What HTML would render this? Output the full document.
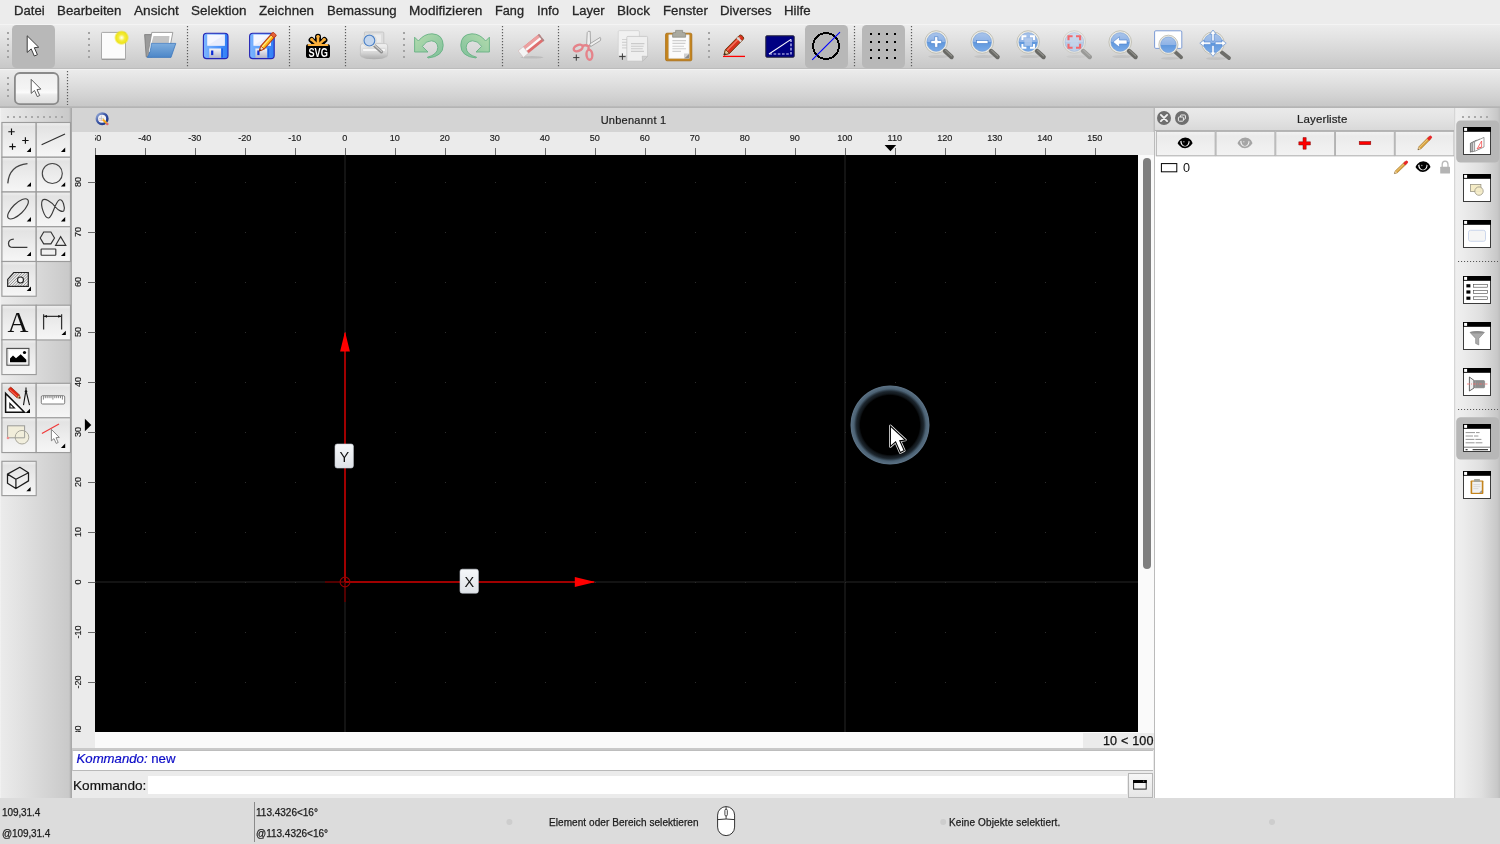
<!DOCTYPE html>
<html><head><meta charset="utf-8"><title>QCAD</title>
<style>
*{box-sizing:border-box;margin:0;padding:0}
body{will-change:transform}
html,body{width:1500px;height:844px;overflow:hidden;background:#ececec;font-family:"Liberation Sans",sans-serif;color:#262626}
.a{position:absolute}
svg{position:absolute;overflow:visible}
#menubar{left:0;top:0;width:1500px;height:24px;background:#ececec}
#menubar span{position:absolute;top:1.7px;font-size:13.6px;line-height:18px;color:#262626;-webkit-text-stroke:.3px #262626;white-space:nowrap;transform-origin:0 50%}
#tb1{left:0;top:24px;width:1500px;height:44px;background:linear-gradient(#f4f4f4 0,#f4f4f4 1px,#ececec 1.5px,#e3e3e3 30%,#d3d3d3 72%,#c8c8c8 100%)}
#tb2{left:0;top:69px;width:1500px;height:38px;background:linear-gradient(#f3f3f3 0,#f3f3f3 1px,#ebebeb 1.5px,#e2e2e2 30%,#d2d2d2 72%,#c6c6c6 100%)}
#left{left:0;top:108px;width:72px;height:690px;background:linear-gradient(90deg,#f4f4f4 0,#ebebeb 2%,#e3e3e3 25%,#d6d6d6 60%,#c9c9c9 96%,#adadad 98.5%,#a6a6a6 100%)}
#tabbar{left:72px;top:108px;width:1082px;height:24px;background:#d4d4d4}
#hruler{left:72px;top:132px;width:1082px;height:23px;background:#ebebeb}
#vruler{left:72px;top:155px;width:23px;height:593px;background:#ebebeb}
#canvas{left:95px;top:155px;width:1043px;height:577px;background:#000;overflow:hidden}
#vscroll{left:1138px;top:155px;width:16px;height:577px;background:#fafafa}
#hscroll{left:95px;top:732px;width:1059px;height:16px;background:#fafafa}
#status{left:0;top:798px;width:1500px;height:46px;background:#dcdcdc}
#dock{left:1155px;top:108px;width:299px;height:690px;background:#fff}
#rtb{left:1454px;top:108px;width:46px;height:690px;background:linear-gradient(90deg,#cdcdcd 0,#efefef 4%,#ececec 20%,#dfdfdf 60%,#c8c8c8 94%,#bdbdbd 100%)}
</style></head><body>
<div id="menubar" class="a"><span style="left:13.6px;transform:scaleX(0.9643)">Datei</span><span style="left:56.8px;transform:scaleX(0.9792)">Bearbeiten</span><span style="left:133.6px;transform:scaleX(1.0050)">Ansicht</span><span style="left:190.8px;transform:scaleX(0.9907)">Selektion</span><span style="left:258.8px;transform:scaleX(0.9835)">Zeichnen</span><span style="left:326.6px;transform:scaleX(0.9694)">Bemassung</span><span style="left:408.8px;transform:scaleX(1.0014)">Modifizieren</span><span style="left:494.8px;transform:scaleX(0.9360)">Fang</span><span style="left:536.8px;transform:scaleX(0.9697)">Info</span><span style="left:571.6px;transform:scaleX(0.9584)">Layer</span><span style="left:616.8px;transform:scaleX(0.9925)">Block</span><span style="left:662.6px;transform:scaleX(0.9719)">Fenster</span><span style="left:719.6px;transform:scaleX(0.9759)">Diverses</span><span style="left:783.6px;transform:scaleX(0.9778)">Hilfe</span></div>
<div id="tb1" class="a"></div>
<div class="a" style="left:0;top:67.5px;width:1500px;height:1.5px;background:linear-gradient(#c2c2c2,#b6b6b6)"></div>
<div id="tb2" class="a"></div>
<div class="a" style="left:0;top:106.4px;width:1500px;height:1.6px;background:linear-gradient(#bcbcbc,#b1b1b1)"></div>
<svg class="a" style="left:0;top:0" width="1500" height="110" viewBox="0 0 1500 110">
<defs>
<linearGradient id="gBlue" x1="0" y1="0" x2="0" y2="1"><stop offset="0" stop-color="#a9c4ea"/><stop offset=".5" stop-color="#8fb3e6"/><stop offset=".5" stop-color="#5f97dc"/><stop offset="1" stop-color="#79aae8"/></linearGradient>
<linearGradient id="gFloppy" x1="0" y1="0" x2="1" y2="0"><stop offset="0" stop-color="#7db6ff"/><stop offset="1" stop-color="#2f7df6"/></linearGradient>
<linearGradient id="gShut" x1="0" y1="0" x2="0" y2="1"><stop offset="0" stop-color="#f4f4f8"/><stop offset="1" stop-color="#b4b4c6"/></linearGradient>
<linearGradient id="gFolder" x1="0" y1="0" x2="0" y2="1"><stop offset="0" stop-color="#7faede"/><stop offset="1" stop-color="#4c86c8"/></linearGradient>
<linearGradient id="gPrinter" x1="0" y1="0" x2="0" y2="1"><stop offset="0" stop-color="#f2f2f2"/><stop offset=".6" stop-color="#dcdcdc"/><stop offset="1" stop-color="#b8b8b8"/></linearGradient>
<linearGradient id="gGreen" x1="0" y1="0" x2="1" y2="1"><stop offset="0" stop-color="#b5dcae"/><stop offset="1" stop-color="#7fc09a"/></linearGradient>
<linearGradient id="gBtn" x1="0" y1="0" x2="0" y2="1"><stop offset="0" stop-color="#eeeeee"/><stop offset=".5" stop-color="#f4f4f4"/><stop offset=".62" stop-color="#fbfbfb"/><stop offset=".7" stop-color="#ececec"/><stop offset="1" stop-color="#dcdcdc"/></linearGradient>
<radialGradient id="gGlow"><stop offset="0" stop-color="#fffff6"/><stop offset=".16" stop-color="#fdfbb4"/><stop offset=".42" stop-color="#f4ec3c"/><stop offset=".74" stop-color="#eee41a"/><stop offset="1" stop-color="#eee41a" stop-opacity="0"/></radialGradient>
<g id="hdl5" fill="#a3a3a3"><rect x="-1" y="32" width="2" height="2"/><rect x="-1" y="38" width="2" height="2"/><rect x="-1" y="44" width="2" height="2"/><rect x="-1" y="50" width="2" height="2"/><rect x="-1" y="56" width="2" height="2"/></g>
<line id="sep1" x1="0" y1="26" x2="0" y2="67" stroke="#5c5c5c" stroke-width="1.2" stroke-dasharray="1.2 1.8"/>
<g id="mag"><circle cx="0" cy="0" r="11.3" fill="#ecebe4" stroke="#b9b8ac" stroke-width=".8"/><circle cx="0" cy="0" r="9.3" fill="url(#gBlue)" stroke="#6f9bd6" stroke-width=".6"/><path d="M8.8 9 L15.4 15" stroke="#6a6a66" stroke-width="4.4" stroke-linecap="round"/><path d="M9.4 8.4 L15.6 14" stroke="#8f8f8a" stroke-width="1.1" stroke-linecap="round"/></g>
<g id="floppy"><rect x="0" y="0" width="24.6" height="25.4" rx="3.2" fill="url(#gFloppy)" stroke="#2525b4" stroke-width="1.1"/><rect x="3.8" y="1.3" width="17.6" height="11.2" fill="#f4f6ff"/><path d="M3.8 12.5 L21.4 1.3 L21.4 12.5Z" fill="#e3e8fb" opacity=".7"/><rect x="5.8" y="15.3" width="11.8" height="9.4" fill="url(#gShut)"/><rect x="7.7" y="17.3" width="2.2" height="4.6" fill="#0a2ad6"/><rect x="18" y="15.3" width="1.6" height="9" fill="#1d5fe8"/></g>
</defs>
<!-- handles & separators -->
<use href="#hdl5" x="8"/><use href="#hdl5" x="89"/><use href="#hdl5" x="404"/><use href="#hdl5" x="709"/>
<use href="#sep1" x="187.5"/><use href="#sep1" x="289.5"/><use href="#sep1" x="345.5"/><use href="#sep1" x="502.5"/><use href="#sep1" x="558.5"/><use href="#sep1" x="854.5"/><use href="#sep1" x="911.5"/>
<!-- pressed buttons -->
<rect x="12" y="25" width="43" height="43" rx="4.5" fill="#b8b8b8"/>
<rect x="805" y="25" width="43" height="43" rx="4.5" fill="#b8b8b8"/>
<rect x="862" y="25" width="43" height="43" rx="4.5" fill="#b8b8b8"/>
<!-- arrow cursor -->
<path d="M27.2 35.8 L27.2 52.4 L31.2 48.9 L34.3 56 L37.4 54.7 L34.3 47.7 L38.7 47.2 Z" fill="#fff" stroke="#3c3c3c" stroke-width="1" stroke-linejoin="miter"/>
<!-- new -->
<rect x="101.5" y="32.4" width="24" height="27.6" rx="1" fill="#8c8c8c"/>
<rect x="101.5" y="32.4" width="24" height="26.6" rx="1" fill="#fbfbfb" stroke="#a9a9a9" stroke-width="1"/>
<circle cx="121.6" cy="37.7" r="7.6" fill="url(#gGlow)"/>
<!-- open -->
<path d="M144.6 34.6 L152 34.6 L152 56.8 L146.2 56.8 Z" fill="#9a9a9a" stroke="#777" stroke-width=".8"/>
<path d="M151.8 32.4 L172.8 32.4 L170.6 44 L148.2 53 Z" fill="#fff" stroke="#8a8a8a" stroke-width=".8"/>
<path d="M153.5 36 L169.5 36 L168.8 43 L151.5 43Z" fill="#c4c4c4"/>
<path d="M151.4 43.4 L175.8 43.4 L171 57.4 L147.2 57.4 Q150.6 53 151.4 43.4Z" fill="url(#gFolder)" stroke="#3f78bd" stroke-width=".8"/>
<!-- save / save as -->
<use href="#floppy" x="203.4" y="33.2"/>
<use href="#floppy" x="249.6" y="33.2"/>
<g transform="translate(259.4 51) rotate(-48.5)"><path d="M0 0 L4.6 -2.2 L22 -2.2 L22 2.2 L4.6 2.2Z" fill="#fdb813" stroke="#b83a16" stroke-width="1"/><path d="M4.6 -0.6 L22 -0.6" stroke="#ffe680" stroke-width="1.4"/><path d="M0 0 L4.6 -2.2 L4.6 2.2Z" fill="#f3e0c0" stroke="#b83a16" stroke-width=".8"/><path d="M0 0 L1.8 -.9 L1.8 .9Z" fill="#222"/><rect x="19.6" y="-2.2" width="3.6" height="4.4" fill="#e6623a" stroke="#b83a16" stroke-width=".8"/></g>
</svg>
<svg class="a" style="left:0;top:0" width="1500" height="110" viewBox="0 0 1500 110">
<!-- SVG icon -->
<g stroke="#000" stroke-width="6" stroke-linecap="round"><path d="M318 44.6 L318 36.7"/><path d="M316.4 44.8 L311.6 40"/><path d="M319.6 44.8 L324.4 40"/></g>
<rect x="306" y="44" width="24" height="14" rx="2.6" fill="#000"/>
<g stroke="#fbb03b" stroke-width="2.6" stroke-linecap="round"><path d="M318 44 L318 36.6"/><path d="M317 44.4 L311.8 39.6"/><path d="M319 44.4 L324.2 39.6"/></g>
<circle cx="318" cy="36.6" r="1.7" fill="#fbb03b"/><circle cx="311.8" cy="39.6" r="1.7" fill="#fbb03b"/><circle cx="324.2" cy="39.6" r="1.7" fill="#fbb03b"/>
<rect x="307.6" y="44" width="20.8" height="1.9" rx=".9" fill="#fbb03b"/>
<text x="318.1" y="56.8" font-family="Liberation Sans" font-weight="bold" font-size="13.1" fill="#fff" text-anchor="middle" textLength="19.4" lengthAdjust="spacingAndGlyphs">SVG</text>
<!-- print preview -->
<rect x="364.4" y="32" width="19.4" height="14" rx="1" fill="#dedede" stroke="#c2c2c2" stroke-width=".8"/>
<rect x="372" y="34.5" width="9" height="8" fill="#ececec"/>
<ellipse cx="374" cy="57.6" rx="11" ry="1.6" fill="#9a9a9a" opacity=".6"/>
<rect x="360.4" y="43.6" width="27.2" height="13.6" rx="2.4" fill="url(#gPrinter)" stroke="#bdbdbd" stroke-width=".7"/>
<rect x="362.6" y="48.4" width="22.8" height="3.2" rx="1" fill="#f6f6f6" stroke="#c9c9c9" stroke-width=".5"/>
<path d="M373.8 45 L381.4 51.8" stroke="#8f8f8f" stroke-width="3.4" stroke-linecap="round"/><path d="M374.4 45 L381.6 51.4" stroke="#cfcfcf" stroke-width="1.2" stroke-linecap="round"/>
<circle cx="369.4" cy="40.6" r="6.9" fill="#f1f1ee" stroke="#cfcfc8" stroke-width=".6"/>
<circle cx="369.4" cy="40.6" r="5.4" fill="#c3d6ee" stroke="#4f82c6" stroke-width="1.2"/>
<!-- undo / redo -->
<path id="undo" d="M414.6 37.2 L414.6 52 L428 52 L422.4 46.4 Q426 40.6 431.4 40.8 Q437.6 41.4 437.8 47.6 Q437.6 54.6 427.4 57.2 L428 58 Q443.2 56.4 443.2 45.4 Q443 34.2 432 33.8 Q424 33.8 418.4 41Z" fill="url(#gGreen)" stroke="#66b183" stroke-width=".9" stroke-linejoin="round"/>
<use href="#undo" transform="translate(904 0) scale(-1 1)"/>
<!-- eraser -->
<ellipse cx="532" cy="57.3" rx="11.5" ry="1.3" fill="#b4b4b4" opacity=".75"/>
<g transform="translate(518.4 51.2) rotate(-39)"><rect x="0" y="-0.4" width="27" height="8.4" rx="1" fill="#de6e6e"/><rect x="0" y="-0.4" width="27" height="3" fill="#eca0a0"/><rect x="6.5" y="2.6" width="20.5" height="2.5" fill="#fafafa"/><rect x="0" y="-0.4" width="6.5" height="8.4" fill="#f4f4f4" stroke="#c8c8c8" stroke-width=".5"/><rect x="25.4" y="-0.4" width="1.6" height="8.4" fill="#a88"/></g>
<!-- cut -->
<path d="M586.6 46 L587.2 32.6 Q588 30.6 590.2 31.4 L590.6 45.4Z" fill="#efefef" stroke="#8d8d8d" stroke-width=".7"/>
<path d="M589.6 44 L600.2 37.4 Q601.2 38.6 600.4 40.6 L590.6 46.6Z" fill="#efefef" stroke="#8d8d8d" stroke-width=".7"/>
<g fill="none" stroke="#e5838a" stroke-width="2.4"><ellipse cx="578.2" cy="48" rx="4.7" ry="2.9" transform="rotate(-24 578.2 48)"/><ellipse cx="589.4" cy="54.8" rx="2.9" ry="5" transform="rotate(-6 589.4 54.8)"/><path d="M582.6 45.8 Q586 44.6 588.6 46.2 Q588.4 48 588.6 50"/></g>
<path d="M573.2 57.6 H579.4 M576.3 54.5 V60.7" stroke="#3a3a3a" stroke-width="1"/>
<!-- copy -->
<rect x="618.2" y="30.6" width="21.2" height="25" rx="1.2" fill="#f1f1f1" stroke="#cfcfcf" stroke-width=".7"/>
<g stroke="#d3d3d3" stroke-width="1.2"><path d="M622 39.5 H628 M622 42.3 H628 M622 45.1 H628 M622 47.9 H628"/></g>
<path d="M626.8 37.4 Q626.8 36.4 627.8 36.4 L646.6 36.4 Q647.6 36.4 647.6 37.4 L647.6 56.4 L642.6 61.2 L627.8 61.2 Q626.8 61.2 626.8 60.2Z" fill="#efefef" stroke="#c4c4c4" stroke-width=".8"/>
<path d="M647.6 56.4 L642.6 61.2 L642.2 56.2Z" fill="#d0d0d0" stroke="#b5b5b5" stroke-width=".6"/>
<g stroke="#cbcbcb" stroke-width="1.1"><path d="M631 43.6 H644.4 M631 46.2 H643.6 M631 48.8 H642.8 M631 51.4 H644"/></g>
<path d="M619.2 56.6 H625.6 M622.4 53.4 V59.8" stroke="#3a3a3a" stroke-width="1"/>
<!-- paste -->
<rect x="665.6" y="33.2" width="26.2" height="27.6" rx="1.4" fill="#c4841d" stroke="#a86c12" stroke-width=".8"/>
<path d="M668.8 34.8 L689.2 34.8 L689.2 58.4 L668.8 58.4Z" fill="#fbfbfb" stroke="#d9d9d9" stroke-width=".6"/>
<path d="M689.2 53.4 L684 58.4 L689.2 58.4Z" fill="#8b8b8b"/><path d="M684 53.6 L689.2 53.4 L684 58.4Z" fill="#cfcfcf"/>
<g stroke="#cfcfcf" stroke-width="1.1"><path d="M672.4 40.6 H686 M672.4 43.4 H685.4 M672.4 46.2 H684 M672.4 48.8 H686 M672.4 51.4 H681"/></g>
<path d="M672.6 37.2 L672.6 34 Q672.6 32.6 674.6 32.6 L675.6 32.6 L675.6 30.4 L682.6 30.4 L682.6 32.6 L683.6 32.6 Q685.6 32.6 685.6 34 L685.6 37.2Z" fill="#aaaaa0" stroke="#85857c" stroke-width=".7"/>
<!-- red pencil -->
<path d="M723 56.4 H745" stroke="#ff0000" stroke-width="1.3"/>
<g transform="translate(724 55) rotate(-45.5)"><path d="M0 0 L5 -2.8 L24.4 -2.8 Q26.4 -2.8 26.4 -0.8 L26.4 0.8 Q26.4 2.8 24.4 2.8 L5 2.8Z" fill="#d8301c" stroke="#6a3a10" stroke-width=".9"/><path d="M5 -1 L24 -1" stroke="#f07860" stroke-width="1.3"/><path d="M0 0 L5 -2.8 L5 2.8Z" fill="#e9c79a" stroke="#6a3a10" stroke-width=".8"/><path d="M0 0 L2 -1.1 L2 1.1Z" fill="#222"/><rect x="20.6" y="-2.8" width="2.2" height="5.6" fill="#d9d9d9"/></g>
<!-- blue dim icon -->
<rect x="765.8" y="35.8" width="28.4" height="21.4" rx="1" fill="#000082" stroke="#26263a" stroke-width="1"/>
<path d="M769 54 L791 39.4" stroke="#fff" stroke-width="1.1"/><path d="M791 39.4 L791 54 L769 54" stroke="#d8d8ff" stroke-width="1.2" stroke-dasharray="2.6 1.6" fill="none"/>
<!-- circle icon -->
<circle cx="826" cy="46" r="12.9" fill="none" stroke="#000" stroke-width="1.9" shape-rendering="crispEdges"/>
<path d="M812.2 59.8 L840 32.2" stroke="#0000ff" stroke-width="1.1"/>
<!-- grid dots -->
<g fill="#000"><rect x="870" y="33" width="2" height="2"/><rect x="878" y="33" width="2" height="2"/><rect x="886" y="33" width="2" height="2"/><rect x="894" y="33" width="2" height="2"/><rect x="870" y="41" width="2" height="2"/><rect x="878" y="41" width="2" height="2"/><rect x="886" y="41" width="2" height="2"/><rect x="894" y="41" width="2" height="2"/><rect x="870" y="49" width="2" height="2"/><rect x="878" y="49" width="2" height="2"/><rect x="886" y="49" width="2" height="2"/><rect x="894" y="49" width="2" height="2"/><rect x="870" y="57" width="2" height="2"/><rect x="878" y="57" width="2" height="2"/><rect x="886" y="57" width="2" height="2"/><rect x="894" y="57" width="2" height="2"/></g>
</svg>
<svg class="a" style="left:0;top:0" width="1500" height="110" viewBox="0 0 1500 110">
<defs>
<g id="magshadow"><ellipse cx="2" cy="14.6" rx="10" ry="1.5" fill="#8e8e8e" opacity=".2"/></g>
</defs>
<!-- zoom in -->
<use href="#magshadow" x="936.2" y="42"/><use href="#mag" x="936.2" y="42"/>
<path d="M934.6 36.6 H937.8 V40.4 H941.6 V43.6 H937.8 V47.4 H934.6 V43.6 H930.8 V40.4 H934.6Z" fill="#fff" stroke="#4c82cc" stroke-width=".7"/>
<!-- zoom out -->
<use href="#magshadow" x="982.2" y="42"/><use href="#mag" x="982.2" y="42"/>
<rect x="976.6" y="40.4" width="11.4" height="3.2" fill="#fff" stroke="#4c82cc" stroke-width=".7"/>
<!-- zoom fit -->
<use href="#magshadow" x="1028.2" y="42"/><use href="#mag" x="1028.2" y="42"/>
<rect x="1024.4" y="38.2" width="7.6" height="7.6" fill="#b7cdee" opacity=".8"/>
<path d="M1022.4 40 V36.2 H1026.4 M1030 36.2 H1034 V40 M1034 44 V47.8 H1030 M1026.4 47.8 H1022.4 V44" fill="none" stroke="#fff" stroke-width="1.9"/>
<!-- zoom selection (disabled) -->
<g opacity=".55"><use href="#magshadow" x="1074.3" y="42"/><use href="#mag" x="1074.3" y="42"/></g>
<circle cx="1074.3" cy="42" r="9" fill="#dfe7f3" opacity=".45"/>
<rect x="1070.5" y="38.2" width="7.6" height="7.6" fill="#c6d4ea" opacity=".8"/>
<path d="M1068.5 40.2 V36.2 H1072.6 M1076 36.2 H1080.1 V40.2 M1080.1 43.8 V47.8 H1076 M1072.6 47.8 H1068.5 V43.8" fill="none" stroke="#f2686c" stroke-width="2.1"/>
<!-- zoom previous -->
<use href="#magshadow" x="1120.2" y="42"/><use href="#mag" x="1120.2" y="42"/>
<path d="M1113 42 L1119.4 36.8 L1119.4 40 L1127 40 L1127 44 L1119.4 44 L1119.4 47.2Z" fill="#fff" stroke="#4c82cc" stroke-width=".6"/>
<!-- zoom window -->
<rect x="1154.6" y="30.8" width="27.2" height="17.6" rx="1.2" fill="#fff" stroke="#6f92d2" stroke-width=".9"/>
<ellipse cx="1170" cy="58.4" rx="9" ry="1.3" fill="#8e8e8e" opacity=".2"/>
<path d="M1174.6 51.4 L1181.2 57.4" stroke="#6e6e6a" stroke-width="3.6" stroke-linecap="round"/>
<circle cx="1168.4" cy="44.8" r="9.6" fill="#ecebe4" stroke="#b9b8ac" stroke-width=".8"/>
<circle cx="1168.4" cy="44.8" r="7.8" fill="url(#gBlue)" stroke="#6f9bd6" stroke-width=".6"/>
<!-- pan zoom -->
<ellipse cx="1216" cy="58.6" rx="10" ry="1.4" fill="#8e8e8e" opacity=".2"/>
<path d="M1221.6 52.2 L1229 58" stroke="#6e6e6a" stroke-width="3.8" stroke-linecap="round"/>
<circle cx="1213" cy="43.2" r="11.3" fill="#ecebe4" stroke="#b9b8ac" stroke-width=".8"/>
<circle cx="1213" cy="43.2" r="9.5" fill="url(#gBlue)" stroke="#6f9bd6" stroke-width=".6"/>
<g fill="#fff" stroke="#4c82cc" stroke-width=".6"><path id="parr" d="M1213 30 L1216.2 34.2 L1214.2 34.2 L1214.2 41 L1211.8 41 L1211.8 34.2 L1209.8 34.2Z"/><use href="#parr" transform="rotate(90 1213 43.2)"/><use href="#parr" transform="rotate(180 1213 43.2)"/><use href="#parr" transform="rotate(270 1213 43.2)"/></g>
<!-- toolbar 2 -->
<g fill="#a3a3a3"><rect x="7" y="77" width="2" height="2"/><rect x="7" y="83" width="2" height="2"/><rect x="7" y="89" width="2" height="2"/><rect x="7" y="95" width="2" height="2"/></g>
<line x1="67.5" y1="71" x2="67.5" y2="105" stroke="#5c5c5c" stroke-width="1.2" stroke-dasharray="1.2 1.8"/>
<rect x="14.9" y="73" width="43.4" height="31.2" rx="5" fill="url(#gBtn)" stroke="#8a8a8a" stroke-width="1.8"/>
<path d="M31.2 79.4 L31.2 93.4 L34.5 90.5 L37.3 96.6 L39.7 95.5 L37 89.6 L40.8 89.1 Z" fill="#fff" stroke="#4a4a4a" stroke-width=".9"/>
</svg>
<div id="left" class="a"></div>
<svg class="a" style="left:0;top:0" width="72" height="800" viewBox="0 0 72 800">
<defs><linearGradient id="gTool" x1="0" y1="0" x2="0" y2="1"><stop offset="0" stop-color="#f0f0f0"/><stop offset=".12" stop-color="#e3e3e3"/><stop offset=".55" stop-color="#ededed"/><stop offset="1" stop-color="#f6f6f6"/></linearGradient></defs>
<g fill="#a9a9a9"><rect x="7" y="116" width="2" height="2"/><rect x="13" y="116" width="2" height="2"/><rect x="19" y="116" width="2" height="2"/><rect x="25" y="116" width="2" height="2"/><rect x="31" y="116" width="2" height="2"/><rect x="37" y="116" width="2" height="2"/><rect x="43" y="116" width="2" height="2"/><rect x="49" y="116" width="2" height="2"/><rect x="55" y="116" width="2" height="2"/><rect x="61" y="116" width="2" height="2"/></g>
<rect x="1.90" y="122.50" width="34.30" height="34.75" fill="url(#gTool)" stroke="#9b9b9b" stroke-width="1.15"/><rect x="36.20" y="122.50" width="34.30" height="34.75" fill="url(#gTool)" stroke="#9b9b9b" stroke-width="1.15"/><rect x="1.90" y="157.25" width="34.30" height="34.75" fill="url(#gTool)" stroke="#9b9b9b" stroke-width="1.15"/><rect x="36.20" y="157.25" width="34.30" height="34.75" fill="url(#gTool)" stroke="#9b9b9b" stroke-width="1.15"/><rect x="1.90" y="192.00" width="34.30" height="34.75" fill="url(#gTool)" stroke="#9b9b9b" stroke-width="1.15"/><rect x="36.20" y="192.00" width="34.30" height="34.75" fill="url(#gTool)" stroke="#9b9b9b" stroke-width="1.15"/><rect x="1.90" y="226.75" width="34.30" height="34.75" fill="url(#gTool)" stroke="#9b9b9b" stroke-width="1.15"/><rect x="36.20" y="226.75" width="34.30" height="34.75" fill="url(#gTool)" stroke="#9b9b9b" stroke-width="1.15"/><rect x="1.90" y="261.50" width="34.30" height="34.75" fill="url(#gTool)" stroke="#9b9b9b" stroke-width="1.15"/><rect x="1.90" y="305.20" width="34.30" height="34.75" fill="url(#gTool)" stroke="#9b9b9b" stroke-width="1.15"/><rect x="36.20" y="305.20" width="34.30" height="34.75" fill="url(#gTool)" stroke="#9b9b9b" stroke-width="1.15"/><rect x="1.90" y="339.80" width="34.30" height="34.75" fill="url(#gTool)" stroke="#9b9b9b" stroke-width="1.15"/><rect x="1.90" y="383.30" width="34.30" height="34.75" fill="url(#gTool)" stroke="#9b9b9b" stroke-width="1.15"/><rect x="36.20" y="383.30" width="34.30" height="34.75" fill="url(#gTool)" stroke="#9b9b9b" stroke-width="1.15"/><rect x="1.90" y="417.80" width="34.30" height="34.75" fill="url(#gTool)" stroke="#9b9b9b" stroke-width="1.15"/><rect x="36.20" y="417.80" width="34.30" height="34.75" fill="url(#gTool)" stroke="#9b9b9b" stroke-width="1.15"/><rect x="1.90" y="461.30" width="34.30" height="34.30" fill="url(#gTool)" stroke="#9b9b9b" stroke-width="1.15"/>
<path d="M31 147.6 L31 151.9 L26.7 151.9Z" fill="#000"/><path d="M65.2 147.6 L65.2 151.9 L60.900000000000006 151.9Z" fill="#000"/><path d="M31 182.3 L31 186.60000000000002 L26.7 186.60000000000002Z" fill="#000"/><path d="M65.2 182.3 L65.2 186.60000000000002 L60.900000000000006 186.60000000000002Z" fill="#000"/><path d="M31 217.1 L31 221.4 L26.7 221.4Z" fill="#000"/><path d="M65.2 217.1 L65.2 221.4 L60.900000000000006 221.4Z" fill="#000"/><path d="M31 251.8 L31 256.1 L26.7 256.1Z" fill="#000"/><path d="M65.2 251.8 L65.2 256.1 L60.900000000000006 256.1Z" fill="#000"/><path d="M31 286.6 L31 290.90000000000003 L26.7 290.90000000000003Z" fill="#000"/><path d="M65.8 330.8 L65.8 335.1 L61.5 335.1Z" fill="#000"/><path d="M30 408.8 L30 413.1 L25.7 413.1Z" fill="#000"/><path d="M65.2 443.6 L65.2 447.90000000000003 L60.900000000000006 447.90000000000003Z" fill="#000"/><path d="M30.6 487 L30.6 491.3 L26.3 491.3Z" fill="#000"/>
<g fill="none" stroke="#2e2e2e" stroke-width="1.15">
<path d="M8.3 131.7 H14.7 M11.5 128.5 V134.89999999999998" stroke="#111"/><path d="M22.2 140.5 H28.599999999999998 M25.4 137.3 V143.7" stroke="#111"/><path d="M9.3 146.6 H15.7 M12.5 143.4 V149.79999999999998" stroke="#111"/><path d="M41.6 144.8 L65 134"/><path d="M7.8 183.4 Q9 165.6 27.5 163.6" stroke-width="1.3" stroke="#444"/><circle cx="52.3" cy="173.5" r="10" stroke="#444"/><ellipse cx="18" cy="208.9" rx="13.4" ry="5.4" transform="rotate(-44 18 208.9)" stroke="#3a3a3a"/><path d="M55.4 207 C51 201 44.5 197.6 42.3 200.4 C40 205 44.6 218.6 48.6 218 C52.6 217.4 55 201.4 59.6 199.8 C63 199 65.2 207.6 63.9 210.6 C62.6 212.6 58.4 210.6 55.4 207Z" stroke="#3a3a3a"/><path d="M13.8 239.2 Q8.4 239.6 8.5 243.4 Q8.6 247.4 13 247.4 L27.4 247.4" stroke="#3a3a3a" stroke-width="1.25"/><path d="M40.2 238 L43.7 232 L50.9 232 L54.5 238 L50.9 243.9 L43.7 243.9Z" stroke="#333"/><path d="M60.6 236.6 L65.8 245.3 L55.6 245.3Z" stroke="#333"/><rect x="41.1" y="249" width="14.7" height="6.2" rx=".6" stroke="#333"/><path d="M7.7 286.4 L7.7 279.4 L13.8 272.5 L28.3 272.5 L28.3 286.4Z" stroke="#222" stroke-width="1.2"/><g stroke="#555" stroke-width=".6"><path d="M7.9 281.6 L16.8 272.7 M7.9 284.4 L19.6 272.7 M8.6 286.4 L22.4 272.7 M11.4 286.4 L25.2 272.7 M14.2 286.4 L28 272.7 M17 286.4 L28.2 275.3 M19.8 286.4 L28.2 278.1 M22.6 286.4 L28.2 280.9 M25.4 286.4 L28.2 283.7"/></g><circle cx="20.5" cy="280" r="3" fill="#f2f2f2" stroke="#222"/><path d="M43.6 314.2 V329.6 M61.6 314.2 V329.6 M43.6 316.3 H61.6" stroke="#333" stroke-width="1.25"/><path d="M43.8 316.3 L47 314.9 L47 317.7Z M61.4 316.3 L58.2 314.9 L58.2 317.7Z" fill="#111" stroke="none"/></g>
<text x="18" y="331.8" font-family="Liberation Serif" font-size="29" fill="#111" text-anchor="middle">A</text>
<rect x="6.9" y="348.4" width="22" height="16.8" fill="#fff" stroke="#4c4c4c" stroke-width="1.1"/><rect x="8.3" y="349.8" width="19.2" height="14" fill="none" stroke="#ddd" stroke-width=".6"/><path d="M10 362.2 L10 358.6 L13 355.4 L16 358.2 L20.7 354.2 L26.3 359.8 L26.3 362.2Z" fill="#000"/><circle cx="24.5" cy="352.5" r="1.6" fill="#000"/>
<path d="M5.6 393.4 L5.6 412.3 L24.4 412.3Z" fill="#fff" stroke="#111" stroke-width="1.5" stroke-linejoin="miter"/><path d="M9.9 403.4 L9.9 408 L14.4 408Z" fill="#fff" stroke="#111" stroke-width="1.2"/><g transform="translate(20.2 398.2) rotate(-137.5)"><path d="M0 0 L3 -1.9 L13.6 -1.9 Q14.8 -1.9 14.8 -.8 L14.8 .8 Q14.8 1.9 13.6 1.9 L3 1.9Z" fill="#e02614" stroke="#8a2a10" stroke-width=".6"/><path d="M0 0 L3 -1.9 L3 1.9Z" fill="#e3b98a" stroke="#7a4a20" stroke-width=".5"/><path d="M0 0 L1.2 -.8 L1.2 .8Z" fill="#222"/><path d="M3.4 -.7 L13.6 -.7" stroke="#ff8a70" stroke-width=".8"/></g><path d="M26 387.4 V391 M25.6 392.4 L23.5 405.2 M26.4 392.4 L29.5 405.2" stroke="#111" stroke-width="1.1" fill="none"/><circle cx="26" cy="391.6" r="1.3" fill="#111"/>
<rect x="41.3" y="395.7" width="23.4" height="8.3" rx="1.2" fill="#fff" stroke="#6e6e6e" stroke-width=".9"/><g stroke="#555" stroke-width=".7"><path d="M43.4 396 V399.6"/><path d="M45.3 396 V398.2"/><path d="M47.2 396 V398.2"/><path d="M49.1 396 V398.2"/><path d="M51.0 396 V398.2"/><path d="M52.9 396 V399.6"/><path d="M54.8 396 V398.2"/><path d="M56.7 396 V398.2"/><path d="M58.6 396 V398.2"/><path d="M60.5 396 V398.2"/><path d="M62.4 396 V399.6"/></g>
<rect x="7.6" y="425.8" width="17" height="12" fill="#f1edda" stroke="#9a9a96" stroke-width="1"/><circle cx="22" cy="437.2" r="6.8" fill="#f1edda" fill-opacity=".9" stroke="#aaa89c" stroke-width="1"/><path d="M14.8 437.8 H24.6 V430.6" fill="none" stroke="#a2a29c" stroke-width="1"/><circle cx="8" cy="438" r="1.3" fill="#f08c8c"/>
<path d="M41.9 433.6 L59 424" stroke="#f03a3a" stroke-width="1.2"/><path d="M51.4 429.4 L51.4 440.8 L54 438.6 L56.2 443.4 L58.2 442.5 L56 437.7 L59.3 437.4Z" fill="#fff" stroke="#6a6a6a" stroke-width=".8"/>
<path d="M19.8 467.3 L28.5 472.7 L28.5 480.9 L15.9 488.5 L7.5 483.2 L7.5 474.1Z M7.5 474.1 L15.9 479.2 L28.5 472.7 M15.9 479.2 V488.5" fill="none" stroke="#1c1c1c" stroke-width="1.25" stroke-linejoin="round"/>
</svg>
<div id="tabbar" class="a"><div class="a" style="left:0;width:1082px;text-align:center;font-size:11px;line-height:14px;top:4.8px;color:#1f1f1f;-webkit-text-stroke:.2px #1f1f1f;padding-left:41px"><span id="doctitle" style="display:inline-block;letter-spacing:.25px">Unbenannt 1</span></div></div>
<svg class="a" style="left:92px;top:108px" width="24" height="24"><defs><linearGradient id="gQ" x1="0" y1="0" x2="1" y2="1"><stop offset="0" stop-color="#9fb2da"/><stop offset=".45" stop-color="#3a55a4"/><stop offset="1" stop-color="#1c3384"/></linearGradient></defs><circle cx="10.1" cy="10.7" r="5.3" fill="#f4f4f6" stroke="url(#gQ)" stroke-width="2.5"/><path d="M7 10.4 H12 M9.4 7.6 V13" stroke="#b9b9c4" stroke-width=".7"/><path d="M7 12.2 H10" stroke="#f0a0a0" stroke-width=".6"/><path d="M10.6 11.2 L14.6 15.2" stroke="#f7a81c" stroke-width="2" stroke-linecap="butt"/><path d="M10.2 10.8 L11 11.6" stroke="#f6e6b0" stroke-width="1.6"/><circle cx="15.3" cy="16" r="1.3" fill="#e06a6a"/></svg>
<div class="a" style="left:1153.4px;top:108px;width:2.4px;height:690px;background:linear-gradient(90deg,#d2d2d2,#b9b9b9 45%,#c4c4c4 75%,#dadada)"></div>
<div id="hruler" class="a"></div><div class="a" id="hr" style="left:95px;top:132px;width:1043px;height:23px;overflow:hidden;font-size:9.1px;line-height:10px;color:#1a1a1a;-webkit-text-stroke:.15px #1a1a1a"><i class="a" style="left:0px;top:16px;width:1px;height:7px;background:#6a6a6a"></i><b class="a" style="left:-20.2px;top:1.2px;width:40px;text-align:center;font-weight:normal">-50</b><i class="a" style="left:50px;top:16px;width:1px;height:7px;background:#6a6a6a"></i><b class="a" style="left:29.8px;top:1.2px;width:40px;text-align:center;font-weight:normal">-40</b><i class="a" style="left:100px;top:16px;width:1px;height:7px;background:#6a6a6a"></i><b class="a" style="left:79.8px;top:1.2px;width:40px;text-align:center;font-weight:normal">-30</b><i class="a" style="left:150px;top:16px;width:1px;height:7px;background:#6a6a6a"></i><b class="a" style="left:129.8px;top:1.2px;width:40px;text-align:center;font-weight:normal">-20</b><i class="a" style="left:200px;top:16px;width:1px;height:7px;background:#6a6a6a"></i><b class="a" style="left:179.8px;top:1.2px;width:40px;text-align:center;font-weight:normal">-10</b><i class="a" style="left:250px;top:16px;width:1px;height:7px;background:#6a6a6a"></i><b class="a" style="left:229.8px;top:1.2px;width:40px;text-align:center;font-weight:normal">0</b><i class="a" style="left:300px;top:16px;width:1px;height:7px;background:#6a6a6a"></i><b class="a" style="left:279.8px;top:1.2px;width:40px;text-align:center;font-weight:normal">10</b><i class="a" style="left:350px;top:16px;width:1px;height:7px;background:#6a6a6a"></i><b class="a" style="left:329.8px;top:1.2px;width:40px;text-align:center;font-weight:normal">20</b><i class="a" style="left:400px;top:16px;width:1px;height:7px;background:#6a6a6a"></i><b class="a" style="left:379.8px;top:1.2px;width:40px;text-align:center;font-weight:normal">30</b><i class="a" style="left:450px;top:16px;width:1px;height:7px;background:#6a6a6a"></i><b class="a" style="left:429.8px;top:1.2px;width:40px;text-align:center;font-weight:normal">40</b><i class="a" style="left:500px;top:16px;width:1px;height:7px;background:#6a6a6a"></i><b class="a" style="left:479.8px;top:1.2px;width:40px;text-align:center;font-weight:normal">50</b><i class="a" style="left:550px;top:16px;width:1px;height:7px;background:#6a6a6a"></i><b class="a" style="left:529.8px;top:1.2px;width:40px;text-align:center;font-weight:normal">60</b><i class="a" style="left:600px;top:16px;width:1px;height:7px;background:#6a6a6a"></i><b class="a" style="left:579.8px;top:1.2px;width:40px;text-align:center;font-weight:normal">70</b><i class="a" style="left:650px;top:16px;width:1px;height:7px;background:#6a6a6a"></i><b class="a" style="left:629.8px;top:1.2px;width:40px;text-align:center;font-weight:normal">80</b><i class="a" style="left:700px;top:16px;width:1px;height:7px;background:#6a6a6a"></i><b class="a" style="left:679.8px;top:1.2px;width:40px;text-align:center;font-weight:normal">90</b><i class="a" style="left:750px;top:16px;width:1px;height:7px;background:#6a6a6a"></i><b class="a" style="left:729.8px;top:1.2px;width:40px;text-align:center;font-weight:normal">100</b><i class="a" style="left:800px;top:16px;width:1px;height:7px;background:#6a6a6a"></i><b class="a" style="left:779.8px;top:1.2px;width:40px;text-align:center;font-weight:normal">110</b><i class="a" style="left:850px;top:16px;width:1px;height:7px;background:#6a6a6a"></i><b class="a" style="left:829.8px;top:1.2px;width:40px;text-align:center;font-weight:normal">120</b><i class="a" style="left:900px;top:16px;width:1px;height:7px;background:#6a6a6a"></i><b class="a" style="left:879.8px;top:1.2px;width:40px;text-align:center;font-weight:normal">130</b><i class="a" style="left:950px;top:16px;width:1px;height:7px;background:#6a6a6a"></i><b class="a" style="left:929.8px;top:1.2px;width:40px;text-align:center;font-weight:normal">140</b><i class="a" style="left:1000px;top:16px;width:1px;height:7px;background:#6a6a6a"></i><b class="a" style="left:979.8px;top:1.2px;width:40px;text-align:center;font-weight:normal">150</b><svg class="a" style="left:0;top:0" width="1043" height="23"><path d="M789.6 13 L801.2 13 L795.4 19.2Z" fill="#000"/></svg></div>
<div id="vruler" class="a"></div><div class="a" id="vr" style="left:72px;top:155px;width:23px;height:577px;overflow:hidden;font-size:9.1px;line-height:10px;color:#1a1a1a;-webkit-text-stroke:.15px #1a1a1a"><i class="a" style="left:16px;top:577px;width:7px;height:1px;background:#6a6a6a"></i><b class="a" style="left:-13.8px;top:571.6px;width:40px;height:10px;text-align:center;font-weight:normal;transform:rotate(-90deg)">-30</b><i class="a" style="left:16px;top:527px;width:7px;height:1px;background:#6a6a6a"></i><b class="a" style="left:-13.8px;top:521.6px;width:40px;height:10px;text-align:center;font-weight:normal;transform:rotate(-90deg)">-20</b><i class="a" style="left:16px;top:477px;width:7px;height:1px;background:#6a6a6a"></i><b class="a" style="left:-13.8px;top:471.6px;width:40px;height:10px;text-align:center;font-weight:normal;transform:rotate(-90deg)">-10</b><i class="a" style="left:16px;top:427px;width:7px;height:1px;background:#6a6a6a"></i><b class="a" style="left:-13.8px;top:421.6px;width:40px;height:10px;text-align:center;font-weight:normal;transform:rotate(-90deg)">0</b><i class="a" style="left:16px;top:377px;width:7px;height:1px;background:#6a6a6a"></i><b class="a" style="left:-13.8px;top:371.6px;width:40px;height:10px;text-align:center;font-weight:normal;transform:rotate(-90deg)">10</b><i class="a" style="left:16px;top:327px;width:7px;height:1px;background:#6a6a6a"></i><b class="a" style="left:-13.8px;top:321.6px;width:40px;height:10px;text-align:center;font-weight:normal;transform:rotate(-90deg)">20</b><i class="a" style="left:16px;top:277px;width:7px;height:1px;background:#6a6a6a"></i><b class="a" style="left:-13.8px;top:271.6px;width:40px;height:10px;text-align:center;font-weight:normal;transform:rotate(-90deg)">30</b><i class="a" style="left:16px;top:227px;width:7px;height:1px;background:#6a6a6a"></i><b class="a" style="left:-13.8px;top:221.6px;width:40px;height:10px;text-align:center;font-weight:normal;transform:rotate(-90deg)">40</b><i class="a" style="left:16px;top:177px;width:7px;height:1px;background:#6a6a6a"></i><b class="a" style="left:-13.8px;top:171.6px;width:40px;height:10px;text-align:center;font-weight:normal;transform:rotate(-90deg)">50</b><i class="a" style="left:16px;top:127px;width:7px;height:1px;background:#6a6a6a"></i><b class="a" style="left:-13.8px;top:121.6px;width:40px;height:10px;text-align:center;font-weight:normal;transform:rotate(-90deg)">60</b><i class="a" style="left:16px;top:77px;width:7px;height:1px;background:#6a6a6a"></i><b class="a" style="left:-13.8px;top:71.6px;width:40px;height:10px;text-align:center;font-weight:normal;transform:rotate(-90deg)">70</b><i class="a" style="left:16px;top:27px;width:7px;height:1px;background:#6a6a6a"></i><b class="a" style="left:-13.8px;top:21.6px;width:40px;height:10px;text-align:center;font-weight:normal;transform:rotate(-90deg)">80</b><svg class="a" style="left:0;top:0" width="23" height="577"><path d="M12.9 263.8 L12.9 276.2 L19.3 270Z" fill="#000"/></svg></div>
<div id="canvas" class="a"><svg class="a" style="left:0;top:0" width="1043" height="577" viewBox="95 155 1043 577"><defs><pattern id="grid" x="95" y="182" width="50" height="50" patternUnits="userSpaceOnUse"><rect x="0" y="0" width="1" height="1" fill="#2c2c2c"/></pattern><radialGradient id="gRing"><stop offset="0" stop-color="#000" stop-opacity="0"/><stop offset=".74" stop-color="#4b6275" stop-opacity="0"/><stop offset=".83" stop-color="#2a3844" stop-opacity=".6"/><stop offset=".9" stop-color="#4a6072"/><stop offset=".975" stop-color="#5b7184"/><stop offset="1" stop-color="#5b7184" stop-opacity="0"/></radialGradient><linearGradient id="gLbl" x1="0" y1="0" x2="0" y2="1"><stop offset="0" stop-color="#f6f8fa"/><stop offset="1" stop-color="#dfe3e8"/></linearGradient></defs><rect x="344" y="155" width="2" height="577" fill="#131313"/><rect x="844" y="155" width="2" height="577" fill="#131313"/><rect x="95" y="581" width="1043" height="2" fill="#131313"/><rect x="95" y="155" width="1043" height="577" fill="url(#grid)"/><path d="M345 582 V602 M325 582 H345" stroke="#520000" stroke-width="2"/><path d="M345 333 V582 M345 582 H594" stroke="#a00000" stroke-width="2"/><path d="M345 331.5 L349.9 351.6 L340.1 351.6Z M595.4 582 L574.8 586.9 L574.8 577.1Z" fill="#ff0000"/><circle cx="345" cy="582" r="4.9" fill="none" stroke="#960000" stroke-width="1.1"/><rect x="335" y="444" width="18.4" height="24" rx="2.2" fill="url(#gLbl)" stroke="#c9ced6" stroke-width=".6"/><text x="344.3" y="462" font-family="Liberation Sans" font-size="14.5" fill="#111" text-anchor="middle">Y</text><rect x="460" y="569.2" width="18.4" height="24" rx="2.2" fill="url(#gLbl)" stroke="#c9ced6" stroke-width=".6"/><text x="469.3" y="587.2" font-family="Liberation Sans" font-size="14.5" fill="#111" text-anchor="middle">X</text><circle cx="890" cy="425" r="40" fill="url(#gRing)"/><path d="M890.4 426 L890.4 446.4 L895.6 441.8 L900.3 452.4 L904.2 450.6 L899.8 440.6 L905.4 440 Z" fill="#fff" stroke="#e6e6e6" stroke-width="2.7" stroke-linejoin="round"/><path d="M890.4 426 L890.4 446.4 L895.6 441.8 L900.3 452.4 L904.2 450.6 L899.8 440.6 L905.4 440 Z" fill="#fff" stroke="#000" stroke-width="1.1" stroke-linejoin="miter"/></svg></div>
<div id="vscroll" class="a"><div class="a" style="left:5px;top:3px;width:8px;height:411px;border-radius:4px;background:#7f7f7f"></div></div>
<div id="hscroll" class="a"></div><div class="a" style="left:72px;top:732px;width:23px;height:16px;background:#ebebeb"></div>
<div class="a" style="left:1083px;top:732px;width:71px;height:16px;background:#ebebeb;font-size:12.6px;line-height:16px;text-align:right;color:#111;-webkit-text-stroke:.25px #111;padding-right:.3px;letter-spacing:.18px;top:732.5px">10 &lt; 100</div>
<div class="a" style="left:72px;top:748px;width:1082px;height:50px;background:#ebebeb"></div><div class="a" style="left:72px;top:748px;width:1082px;height:2px;background:#c9c9c9"></div><div class="a" style="left:72px;top:749.5px;width:1081px;height:21px;background:#fff;border-top:1px solid #bdbdbd;border-bottom:1px solid #b9b9b9;border-left:1px solid #d0d0d0"></div><div class="a" style="left:76.5px;top:750.5px;font-size:13.2px;line-height:16px;color:#0d0dc8;-webkit-text-stroke:.2px #0d0dc8;white-space:pre"><i id="cmdh">Kommando:</i> new</div><div class="a" style="left:148px;top:776px;width:979px;height:18px;background:#fff"></div><div class="a" id="cmdl" style="left:73px;top:776.5px;font-size:13.6px;line-height:17px;color:#111;-webkit-text-stroke:.2px #111">Kommando:</div><div class="a" style="left:1127.5px;top:772.5px;width:25px;height:25px;border:1px solid #b6b6b6;background:linear-gradient(#f6f6f6,#e6e6e6)"></div><svg class="a" style="left:1127px;top:772px" width="26" height="26"><rect x="6.6" y="8.5" width="12.6" height="8.6" fill="#f4f4f4" stroke="#222" stroke-width="1"/><rect x="6.1" y="8" width="13.6" height="3" fill="#000"/><rect x="16.2" y="8.8" width="1" height=".8" fill="#ccc"/></svg>
<div id="dock" class="a"></div>
<div class="a" style="left:1155px;top:108px;width:299.5px;height:23px;background:linear-gradient(#eaeaea 0,#e4e4e4 45%,#d9d9d9 100%);border-bottom:1px solid #b4b4b4"></div><div class="a" style="left:1155px;width:299.5px;text-align:center;font-size:11.5px;line-height:14px;top:112.3px;color:#222;-webkit-text-stroke:.2px #222;padding-left:35px;letter-spacing:.12px">Layerliste</div>
<svg class="a" style="left:1155px;top:108px" width="300" height="80" viewBox="1155 108 300 80"><defs><linearGradient id="gLB" x1="0" y1="0" x2="0" y2="1"><stop offset="0" stop-color="#f3f3f3"/><stop offset=".2" stop-color="#ebebeb"/><stop offset="1" stop-color="#f3f3f3"/></linearGradient><g id="eye"><path d="M-7.5 .4 Q-6.6 -1.6 -5.6 -2.6 Q-3.4 -5.4 .2 -5.4 Q4 -5.4 5.8 -2.8 Q6.8 -1.4 7.5 .4 Q6.6 1.8 5.4 3 Q3.4 5.4 0 5.4 Q-3.4 5.4 -5.2 3.2 Q-6.6 2 -7.5 .4Z"/><path d="M-4.9 -1.2 Q-4.4 -1.8 -3.6 -2 Q-3.4 3 0 3.1 Q3.2 3 3.6 -2 Q4.2 -1.7 4.6 -1.1 Q4.4 1.2 2.8 2.6 Q1.6 3.6 0 3.6 Q-1.8 3.6 -3 2.6 Q-4.6 1.2 -4.9 -1.2Z" fill="#fff"/><circle cx="-1.2" cy="-1" r=".75" fill="#9a9a9a"/></g><g id="pcl"><path d="M0 0 L2.6 -1.5 L17.2 -1.5 L17.2 1.5 L2.6 1.5Z" fill="#d9a441" stroke="#94671c" stroke-width=".5"/><path d="M2.6 -.4 L14.4 -.4" stroke="#f0cc80" stroke-width=".8"/><path d="M14.4 -1.5 H18.4 Q19.2 -1.5 19.2 -.7 V.7 Q19.2 1.5 18.4 1.5 H14.4Z" fill="#e8262a"/><path d="M0 0 L2.6 -1.5 L2.6 1.5Z" fill="#e8cfa0"/><path d="M0 0 L1.1 -.6 L1.1 .6Z" fill="#333"/></g></defs><rect x="1156.30" y="131.4" width="58.90" height="24.4" fill="url(#gLB)" stroke="#b3b3b3" stroke-width="1.1"/><rect x="1216.02" y="131.4" width="58.90" height="24.4" fill="url(#gLB)" stroke="#b3b3b3" stroke-width="1.1"/><rect x="1275.74" y="131.4" width="58.90" height="24.4" fill="url(#gLB)" stroke="#b3b3b3" stroke-width="1.1"/><rect x="1335.46" y="131.4" width="58.90" height="24.4" fill="url(#gLB)" stroke="#b3b3b3" stroke-width="1.1"/><rect x="1395.18" y="131.4" width="58.90" height="24.4" fill="url(#gLB)" stroke="#b3b3b3" stroke-width="1.1"/><circle cx="1164" cy="118" r="7" fill="#6f6f6f"/><path d="M1160.9 114.9 L1167.1 121.1 M1167.1 114.9 L1160.9 121.1" stroke="#f2f2f2" stroke-width="1.9" stroke-linecap="round"/><circle cx="1182" cy="118" r="7" fill="#6f6f6f"/><rect x="1180.4" y="115" width="5" height="4.2" rx=".8" fill="none" stroke="#eee" stroke-width="1"/><rect x="1178.4" y="117" width="5" height="4.2" rx=".8" fill="#6f6f6f" stroke="#eee" stroke-width="1"/><use href="#eye" x="1185.1" y="142.8" fill="#000"/><g opacity=".3"><use href="#eye" x="1245" y="142.8" fill="#000"/></g><path d="M1303 137.6 H1306.2 V141.8 H1310.4 V145 H1306.2 V149.2 H1303 V145 H1298.8 V141.8 H1303Z" fill="#f00" stroke="#7a1010" stroke-width=".5"/><rect x="1359.2" y="141.5" width="11.6" height="3.2" fill="#f00" stroke="#7a1010" stroke-width=".5"/><use href="#pcl" transform="translate(1417.9 149.8) rotate(-45.2)"/><rect x="1161.4" y="163.6" width="15.4" height="8.2" fill="#fff" stroke="#000" stroke-width="1"/><text x="1183" y="172" font-family="Liberation Sans" font-size="12.6" fill="#111">0</text><use href="#pcl" transform="translate(1394.4 173.6) rotate(-43.7) scale(.94)"/><use href="#eye" x="1423" y="166.6" fill="#000"/><rect x="1440.2" y="166.8" width="9.8" height="6.8" rx=".5" fill="#b4b4b4"/><path d="M1442.2 167 V164.4 Q1442.2 161.2 1445.1 161.2 Q1448 161.2 1448 164.4 V167" fill="none" stroke="#b9b9b9" stroke-width="1.3"/></svg>
<div id="rtb" class="a"></div>
<svg class="a" style="left:1454px;top:108px" width="46" height="420" viewBox="1454 108 46 420"><defs><g id="win"><rect x=".5" y=".5" width="27" height="27" fill="#fff" stroke="#3c3c3c" stroke-width="1"/><rect x="0" y="0" width="28" height="4.8" fill="#000"/><rect x="1.1" y=".9" width="3" height="3" fill="#fff"/></g></defs><rect x="1456.2" y="120.4" width="43" height="42.2" rx="4.5" fill="#b7b7b7"/><rect x="1456.2" y="417.2" width="43" height="42.4" rx="4.5" fill="#b7b7b7"/><g fill="#a9a9a9"><rect x="1462" y="116" width="2" height="2"/><rect x="1468" y="116" width="2" height="2"/><rect x="1474" y="116" width="2" height="2"/><rect x="1480" y="116" width="2" height="2"/><rect x="1486" y="116" width="2" height="2"/></g><path d="M1458 261.5 H1498 M1458 409.5 H1498" stroke="#555" stroke-width="1.1" stroke-dasharray="1.1 1.9"/><use href="#win" x="1463" y="127"/><use href="#win" x="1463" y="174"/><use href="#win" x="1463" y="220"/><use href="#win" x="1463" y="276"/><use href="#win" x="1463" y="322"/><use href="#win" x="1463" y="368"/><use href="#win" x="1463" y="424"/><use href="#win" x="1463" y="471"/><path d="M1470.4 143.2 L1476.6 140.2 L1476.6 149.4 L1470.4 152.2Z" fill="#bbb" stroke="#555" stroke-width=".7"/><path d="M1472.4 142.6 L1480 139 L1480 148.4 L1472.4 152Z" fill="#ddd" stroke="#666" stroke-width=".6"/><path d="M1474.6 141.6 L1484 137.4 L1484 147 L1474.6 151.4Z" fill="#fff" stroke="#777" stroke-width=".7"/><path d="M1477 149 L1481.6 141 L1481.6 147Z M1478.6 147.4 H1481.6" fill="none" stroke="#f04040" stroke-width=".7"/><rect x="1470.5" y="184.4" width="10.4" height="7.2" fill="#f5ecc6" stroke="#9a9684" stroke-width=".8"/><circle cx="1479" cy="191.1" r="4.2" fill="#f5ecc6" fill-opacity=".9" stroke="#9a9684" stroke-width=".8"/><rect x="1468.5" y="230.3" width="17" height="11" rx="2" fill="#f5f5f5" stroke="#c6d3ea" stroke-width=".9"/><rect x="1466.4" y="284.2" width="4" height="3.2" fill="#000"/><rect x="1473.7" y="284.4" width="14" height="2.8" fill="#fff" stroke="#444" stroke-width=".6"/><rect x="1466.4" y="290.4" width="4" height="3.2" fill="#000"/><rect x="1473.7" y="290.59999999999997" width="14" height="2.8" fill="#fff" stroke="#444" stroke-width=".6"/><rect x="1466.4" y="296.6" width="4" height="3.2" fill="#000"/><rect x="1473.7" y="296.8" width="14" height="2.8" fill="#fff" stroke="#444" stroke-width=".6"/><path d="M1470 332.4 Q1477 330.6 1484.4 332.4 L1478.8 338.4 L1478.8 345 L1475.6 343.4 L1475.6 338.4Z" fill="#aaa" stroke="#777" stroke-width=".5"/><ellipse cx="1477.2" cy="332.3" rx="7.2" ry="1.3" fill="#8c8c8c"/><path d="M1469.4 377 L1474 380.4 L1474 388 L1469.4 391Z" fill="#eee" stroke="#444" stroke-width=".8"/><rect x="1474" y="380.6" width="10.6" height="7.2" rx=".8" fill="#999" stroke="#666" stroke-width=".5"/><path d="M1477 380.8 V387.6 M1479 380.8 V387.6 M1481 380.8 V387.6 M1483 380.8 V387.6" stroke="#777" stroke-width=".6"/><path d="M1467 384 H1487.5" stroke="#f07070" stroke-width=".8" stroke-dasharray="3 1 1 1"/><g stroke="#8a8a8a" stroke-width=".9"><path d="M1465.6 432.6 H1475 M1476 432.6 H1479.6 M1465.6 436 H1473 M1474 436 H1478.4 M1465.6 439.4 H1474.4 M1475.4 439.4 H1481.4 M1465.6 442.8 H1474.6 M1475.6 442.8 H1482.4"/></g><path d="M1463.5 447.2 H1490.5" stroke="#555" stroke-width=".8"/><path d="M1465.6 449.6 H1467.6 M1472.6 449.6 H1488" stroke="#444" stroke-width="1.1"/><rect x="1470.6" y="480.4" width="12.8" height="13.6" rx=".8" fill="#c4841d"/><rect x="1472.2" y="481.6" width="9.6" height="11.2" fill="#f1f1f1"/><rect x="1474" y="479" width="6" height="3" rx=".6" fill="#a5a59c"/><path d="M1473.4 484.6 H1480.4 M1473.4 486.6 H1480.4 M1473.4 488.6 H1478.4" stroke="#d0d0d0" stroke-width=".7"/><path d="M1481.8 490.2 L1479.2 492.8 L1481.8 492.8Z" fill="#888"/></svg>
<div id="status" class="a" style="font-size:10px;line-height:12px;color:#1c1c1c;white-space:pre;-webkit-text-stroke:.25px #1c1c1c"><div class="a" style="left:2px;top:8.6px;letter-spacing:-.1px">109,31.4</div><div class="a" style="left:2px;top:29.8px;letter-spacing:-.1px">@109,31.4</div><div class="a" style="left:253.5px;top:4px;width:1px;height:40px;background:#8a8a8a"></div><div class="a" style="left:256px;top:8.6px">113.4326&lt;16°</div><div class="a" style="left:256px;top:29.8px">@113.4326&lt;16°</div><div class="a" style="left:549px;top:19.3px;letter-spacing:.07px">Element oder Bereich selektieren</div><div class="a" id="nosel" style="left:949px;top:19.3px;letter-spacing:.12px">Keine Objekte selektiert.</div><svg class="a" style="left:0;top:0" width="1500" height="46"><circle cx="509.4" cy="24" r="3" fill="#cdcdcd"/><circle cx="943.2" cy="24" r="3" fill="#cdcdcd"/><circle cx="1272" cy="24" r="3" fill="#cdcdcd"/><rect x="717.6" y="8.6" width="17" height="29" rx="8.5" fill="#fff" stroke="#333" stroke-width="1"/><path d="M717.6 21.6 Q726.1 20.4 734.6 21.6" fill="none" stroke="#333" stroke-width="1"/><path d="M726.1 8.6 V21" stroke="#333" stroke-width=".9"/><rect x="724.9" y="11.2" width="2.4" height="6.8" rx="1.2" fill="#fff" stroke="#333" stroke-width=".9"/></svg></div>
</body></html>
